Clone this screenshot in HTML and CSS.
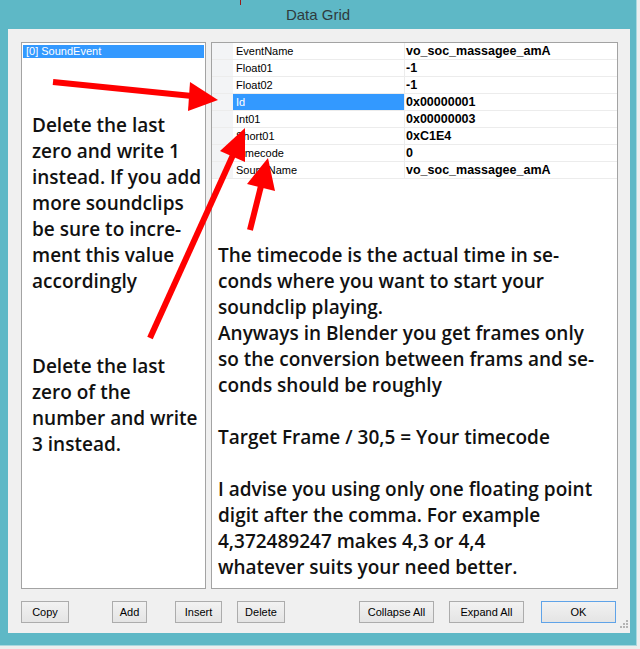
FILE: index.html
```html
<!DOCTYPE html>
<html lang="en">
<head>
    <meta charset="UTF-8">
    <meta name="viewport" content="width=device-width, initial-scale=1.0">
    <title>Data Grid</title>
    <link rel="stylesheet" href="styles.css">
</head>
<body>

    <div class="window">
        <div class="titlebar">Data Grid</div>
        <div class="client">
            <div class="panes">
                <div class="listbox">
                    <div class="list-item selected">[0] SoundEvent</div>
                    <p class="note note-first">Delete the last<br>zero and write 1<br>instead. If you add<br>more soundclips<br>be sure to incre-<br>ment this value<br>accordingly</p>
                    <p class="note note-second">Delete the last<br>zero of the<br>number and write<br>3 instead.</p>
                </div>

                <div class="propgrid">
                    <div class="prop-row"><span class="gutter"></span><span class="prop-name">EventName</span><span class="prop-value">vo_soc_massagee_amA</span></div>
                    <div class="prop-row"><span class="gutter"></span><span class="prop-name">Float01</span><span class="prop-value">-1</span></div>
                    <div class="prop-row"><span class="gutter"></span><span class="prop-name">Float02</span><span class="prop-value">-1</span></div>
                    <div class="prop-row"><span class="gutter"></span><span class="prop-name selected">Id</span><span class="prop-value">0x00000001</span></div>
                    <div class="prop-row"><span class="gutter"></span><span class="prop-name">Int01</span><span class="prop-value">0x00000003</span></div>
                    <div class="prop-row"><span class="gutter"></span><span class="prop-name">Short01</span><span class="prop-value">0xC1E4</span></div>
                    <div class="prop-row"><span class="gutter"></span><span class="prop-name">Timecode</span><span class="prop-value">0</span></div>
                    <div class="prop-row"><span class="gutter"></span><span class="prop-name">SoundName</span><span class="prop-value">vo_soc_massagee_amA</span></div>

                    <div class="note-block">
                        <p class="note">The timecode is the actual time in se-<br>conds where you want to start your<br>soundclip playing.<br>Anyways in Blender you get frames only<br>so the conversion between frams and se-<br>conds should be roughly</p>
                        <p class="note">Target Frame / 30,5 = Your timecode</p>
                        <p class="note">I advise you using only one floating point<br>digit after the comma. For example<br>4,372489247 makes 4,3 or 4,4<br>whatever suits your need better.</p>
                    </div>
                </div>
            </div>

            <div class="buttons">
                <button class="btn btn-copy">Copy</button>
                <button class="btn btn-add">Add</button>
                <button class="btn btn-insert">Insert</button>
                <button class="btn btn-delete">Delete</button>
                <button class="btn btn-collapse">Collapse All</button>
                <button class="btn btn-expand">Expand All</button>
                <button class="btn btn-ok">OK</button>
            </div>
        </div>
    </div>

    <!-- red arrows drawn over the dialog -->
    <svg class="markup" width="640" height="649" viewBox="0 0 640 649">
        <line x1="240.5" y1="0" x2="240.5" y2="5" stroke="#9a1a1a" stroke-width="1"/>
        <g fill="#ff0000" stroke="#ff0000">
            <line x1="53" y1="82" x2="192" y2="96" stroke-width="6"/>
            <polygon points="190,82 188,111 218,100" stroke="none"/>

            <line x1="150" y1="338" x2="233" y2="155" stroke-width="6"/>
            <polygon points="220,151 245,162 245,128" stroke="none"/>

            <line x1="250" y1="230" x2="261" y2="186" stroke-width="6"/>
            <polygon points="247,184 275,191 268,158" stroke="none"/>
        </g>
        <g fill="#b4b4b4">
            <rect x="626" y="620" width="2" height="2"/>
            <rect x="623" y="623" width="2" height="2"/>
            <rect x="626" y="623" width="2" height="2"/>
            <rect x="620" y="626" width="2" height="2"/>
            <rect x="623" y="626" width="2" height="2"/>
            <rect x="626" y="626" width="2" height="2"/>
        </g>
    </svg>

</body>
</html>
```

FILE: styles.css
```css
body {
    margin: 0;
    width: 640px;
    height: 649px;
    position: relative;
    overflow: hidden;
    background-color: #eceeee;
    font-family: "Liberation Sans", Arial, sans-serif;
}

.window {
    width: 636px;
    height: 645px;
    background-color: #5eb8c6;
    border-right: 1px solid #a9d8df;
    border-bottom: 1px solid #a9d8df;
    display: flex;
    flex-direction: column;
}

.titlebar {
    height: 29px;
    line-height: 29px;
    text-align: center;
    font-size: 15px;
    color: #2f3b3d;
}

.client {
    margin: 0 6px 0 8px;
    height: 604px;
    box-sizing: border-box;
    padding: 13px 12px 10px 13px;
    background-color: #f0f0f0;
    display: flex;
    flex-direction: column;
}

.panes {
    display: flex;
    gap: 5px;
    height: 547px;
}

.listbox {
    width: 185px;
    box-sizing: border-box;
    border: 1px solid #a3a3a3;
    background-color: #fff;
    padding: 2px 1px 0;
}

.list-item {
    height: 13px;
    line-height: 13px;
    font-size: 11px;
    color: #000;
    padding-left: 3px;
}

.list-item.selected {
    background-color: #3399ff;
    color: #fff;
}

.note {
    margin: 0;
    font-family: "Open Sans", "Noto Sans", sans-serif;
    font-weight: 600;
    font-size: 19px;
    line-height: 26px;
    color: #111;
    white-space: nowrap;
}

.listbox .note {
    padding-left: 9px;
}

.note-first {
    margin-top: 54px;
}

.note-second {
    margin-top: 59px;
}

.propgrid {
    width: 407px;
    box-sizing: border-box;
    border: 1px solid #a3a3a3;
    background-color: #fff;
}

.prop-row {
    display: grid;
    grid-template-columns: 21px 172px 1fr;
    height: 17px;
    box-sizing: border-box;
    border-bottom: 1px solid #ececec;
    font-size: 11px;
    line-height: 16px;
    color: #000;
}

.gutter {
    background-color: #f3f4f6;
}

.prop-name {
    padding-left: 3px;
    border-right: 1px solid #ececec;
    white-space: nowrap;
}

.prop-name.selected {
    background-color: #3399ff;
    color: #fff;
}

.prop-value {
    padding-left: 1px;
    font-weight: bold;
    font-size: 12.5px;
    white-space: nowrap;
}

.note-block {
    margin-top: 63px;
    padding-left: 6px;
    display: flex;
    flex-direction: column;
    gap: 26px;
}

.buttons {
    display: flex;
    margin-top: 12px;
    height: 22px;
}

.btn {
    height: 22px;
    box-sizing: border-box;
    padding: 0;
    border: 1px solid #acacac;
    background: linear-gradient(#f2f2f2, #e4e4e4);
    font-family: "Liberation Sans", Arial, sans-serif;
    font-size: 11px;
    color: #000;
}

.btn-copy { width: 48px; }
.btn-add { width: 35px; margin-left: 43px; }
.btn-insert { width: 47px; margin-left: 28px; }
.btn-delete { width: 48px; margin-left: 15px; }
.btn-collapse { width: 75px; margin-left: 74px; }
.btn-expand { width: 75px; margin-left: 15px; }
.btn-ok { width: 75px; margin-left: 17px; border-color: #5fa3e8; }

.markup {
    position: absolute;
    top: 0;
    left: 0;
    pointer-events: none;
}
```
